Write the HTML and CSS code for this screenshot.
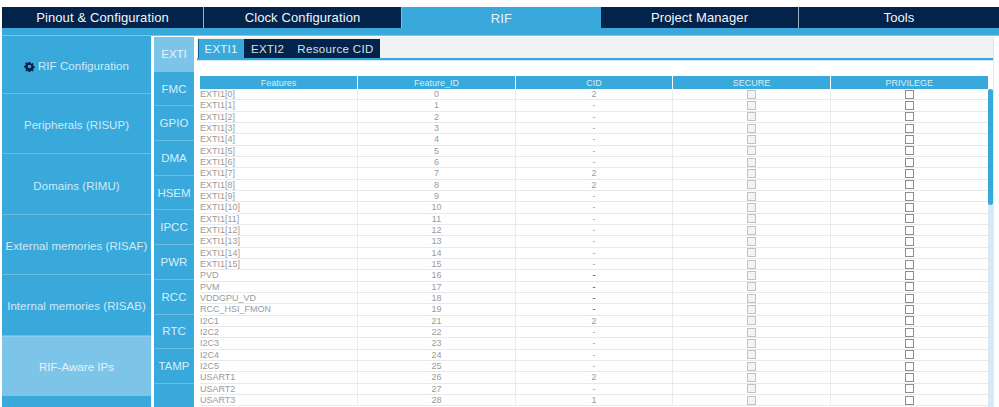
FILE: index.html
```html
<!DOCTYPE html>
<html lang="en">
<head>
<meta charset="utf-8">
<title>RIF</title>
<link rel="stylesheet" href="styles.css">
</head>
<body>
<div class="app">
  <nav class="topnav">
    <div class="topitem">Pinout &amp; Configuration</div>
    <div class="topitem">Clock Configuration</div>
    <div class="topitem active">RIF</div>
    <div class="topitem">Project Manager</div>
    <div class="topitem">Tools</div>
  </nav>
  <div class="strip"></div>
  <div class="main">
    <aside class="side">
      <div class="sideitem first"><svg class="gear" viewBox="0 0 24 24"><path d="M10 1h4l.6 3.1 2.3 1 2.6-1.8 2.8 2.8-1.8 2.6 1 2.3 3.1.6v4l-3.1.6-1 2.3 1.8 2.6-2.8 2.8-2.6-1.8-2.3 1-.6 3.1h-4l-.6-3.1-2.3-1-2.6 1.8-2.8-2.8 1.8-2.6-1-2.3L-1 14v-4l3.1-.6 1-2.3L1.3 4.500l2.800-2.800 2.600 1.800 2.300-1z" transform="translate(1.200 1.200) scale(.9)"/><circle cx="12" cy="12" r="4" class="hole"/></svg>RIF Configuration</div>
      <div class="sideitem">Peripherals (RISUP)</div>
      <div class="sideitem">Domains (RIMU)</div>
      <div class="sideitem">External memories (RISAF)</div>
      <div class="sideitem">Internal memories (RISAB)</div>
      <div class="sideitem selected">RIF-Aware IPs</div>
    </aside>
    <div class="subside">
      <div class="subitem selected">EXTI</div>
      <div class="subitem">FMC</div>
      <div class="subitem">GPIO</div>
      <div class="subitem">DMA</div>
      <div class="subitem">HSEM</div>
      <div class="subitem">IPCC</div>
      <div class="subitem">PWR</div>
      <div class="subitem">RCC</div>
      <div class="subitem">RTC</div>
      <div class="subitem">TAMP</div>
    </div>
    <section class="content">
      <div class="tabs">
        <div class="tab active">EXTI1</div>
        <div class="tab">EXTI2</div>
        <div class="tab">Resource CID</div>
      </div>
      <div class="tablewrap">
        <div class="table">
          <div class="row head"><span>Features</span><span>Feature_ID</span><span>CID</span><span>SECURE</span><span>PRIVILEGE</span></div>
          <div class="row"><span>EXTI1[0]</span><span>0</span><span>2</span><span><i class="cb"></i></span><span><i class="cb dark"></i></span></div>
          <div class="row"><span>EXTI1[1]</span><span>1</span><span>-</span><span><i class="cb"></i></span><span><i class="cb dark"></i></span></div>
          <div class="row"><span>EXTI1[2]</span><span>2</span><span>-</span><span><i class="cb"></i></span><span><i class="cb dark"></i></span></div>
          <div class="row"><span>EXTI1[3]</span><span>3</span><span>-</span><span><i class="cb"></i></span><span><i class="cb dark"></i></span></div>
          <div class="row"><span>EXTI1[4]</span><span>4</span><span>-</span><span><i class="cb"></i></span><span><i class="cb dark"></i></span></div>
          <div class="row"><span>EXTI1[5]</span><span>5</span><span>-</span><span><i class="cb"></i></span><span><i class="cb dark"></i></span></div>
          <div class="row"><span>EXTI1[6]</span><span>6</span><span>-</span><span><i class="cb"></i></span><span><i class="cb dark"></i></span></div>
          <div class="row"><span>EXTI1[7]</span><span>7</span><span>2</span><span><i class="cb"></i></span><span><i class="cb dark"></i></span></div>
          <div class="row"><span>EXTI1[8]</span><span>8</span><span>2</span><span><i class="cb"></i></span><span><i class="cb dark"></i></span></div>
          <div class="row"><span>EXTI1[9]</span><span>9</span><span>-</span><span><i class="cb"></i></span><span><i class="cb dark"></i></span></div>
          <div class="row"><span>EXTI1[10]</span><span>10</span><span>-</span><span><i class="cb"></i></span><span><i class="cb dark"></i></span></div>
          <div class="row"><span>EXTI1[11]</span><span>11</span><span>-</span><span><i class="cb"></i></span><span><i class="cb dark"></i></span></div>
          <div class="row"><span>EXTI1[12]</span><span>12</span><span>-</span><span><i class="cb"></i></span><span><i class="cb dark"></i></span></div>
          <div class="row"><span>EXTI1[13]</span><span>13</span><span>-</span><span><i class="cb"></i></span><span><i class="cb dark"></i></span></div>
          <div class="row"><span>EXTI1[14]</span><span>14</span><span>-</span><span><i class="cb"></i></span><span><i class="cb dark"></i></span></div>
          <div class="row"><span>EXTI1[15]</span><span>15</span><span>-</span><span><i class="cb"></i></span><span><i class="cb dark"></i></span></div>
          <div class="row"><span>PVD</span><span>16</span><span class="strong">-</span><span><i class="cb"></i></span><span><i class="cb dark"></i></span></div>
          <div class="row"><span>PVM</span><span>17</span><span class="strong">-</span><span><i class="cb"></i></span><span><i class="cb dark"></i></span></div>
          <div class="row"><span>VDDGPU_VD</span><span>18</span><span class="strong">-</span><span><i class="cb"></i></span><span><i class="cb dark"></i></span></div>
          <div class="row"><span>RCC_HSI_FMON</span><span>19</span><span class="strong">-</span><span><i class="cb"></i></span><span><i class="cb dark"></i></span></div>
          <div class="row"><span>I2C1</span><span>21</span><span>2</span><span><i class="cb"></i></span><span><i class="cb dark"></i></span></div>
          <div class="row"><span>I2C2</span><span>22</span><span>-</span><span><i class="cb"></i></span><span><i class="cb dark"></i></span></div>
          <div class="row"><span>I2C3</span><span>23</span><span>-</span><span><i class="cb"></i></span><span><i class="cb dark"></i></span></div>
          <div class="row"><span>I2C4</span><span>24</span><span>-</span><span><i class="cb"></i></span><span><i class="cb dark"></i></span></div>
          <div class="row"><span>I2C5</span><span>25</span><span>-</span><span><i class="cb"></i></span><span><i class="cb dark"></i></span></div>
          <div class="row"><span>USART1</span><span>26</span><span>2</span><span><i class="cb"></i></span><span><i class="cb dark"></i></span></div>
          <div class="row"><span>USART2</span><span>27</span><span>-</span><span><i class="cb"></i></span><span><i class="cb dark"></i></span></div>
          <div class="row"><span>USART3</span><span>28</span><span>1</span><span><i class="cb"></i></span><span><i class="cb dark"></i></span></div>
        </div>
        <div class="track"><div class="thumb"></div></div>
      </div>
    </section>
  </div>
</div>
</body>
</html>
```
FILE: styles.css
```css
* { box-sizing: border-box; }
html, body { margin: 0; height: 100%; overflow: hidden; background: #fff; }
body { font-family: "Liberation Sans", Arial, sans-serif; }
.app { height: 407px; padding: 7px 0 0 2px; display: flex; flex-direction: column; overflow: hidden; }

.topnav { display: flex; height: 21px; flex: none; background: #03234b; width: 997px; }
.topitem { width: 198px; display: flex; align-items: center; justify-content: center; color: #f2f6fa; font-size: 13px; letter-spacing: .12px; border-right: 1px solid #9fb0c4; }
.topitem:first-child { width: 202px; }
.topitem:last-child { border-right: 0; width: 200px; }
.topitem.active { background: #39a9dc; color: #e8f4fb; height: 22px; border-right: 0; width: 199px; }
.strip { height: 8px; flex: none; background: #39a9dc; width: 997px; border-bottom: 1px solid #7cc4e8; }

.main { flex: 1; display: flex; min-height: 0; }
.side { width: 149px; flex: none; background: #39a9dc; display: flex; flex-direction: column; }
.sideitem { height: 60.400px; flex: none; display: flex; align-items: center; justify-content: center; color: #cfe9f7; font-size: 11.500px; letter-spacing: .05px; padding-top: 3px; border-bottom: 1px solid #6cbde4; white-space: nowrap; }
.sideitem.first { height: 58px; }
.sideitem.selected { background: #7cc5e9; color: #e3f3fb; border-top: 1px solid #8fcfee; border-bottom: 0; padding-top: 1px; }
.gear { width: 11px; height: 11px; margin-right: 3px; fill: #03234b; }
.gear .hole { fill: #39a9dc; }

.subside { width: 40px; flex: none; margin-left: 3px; margin-top: 1px; background: #39a9dc; display: flex; flex-direction: column; }
.subitem { height: 34.700px; flex: none; display: flex; align-items: center; justify-content: center; color: #d7eef9; font-size: 11.500px; border-bottom: 1px solid #6cbde4; }
.subitem.selected { background: #7cc5e9; color: #e6f4fb; border-bottom: 0; }

.content { width: 797px; flex: none; margin-left: 3px; margin-top: 1px; border-right: 1px solid #d8e8f5; display: flex; flex-direction: column; min-height: 0; }
.tabs { height: 23px; flex: none; display: flex; background: #f0f1f3; padding: 2px 0 0 1px; border-bottom: 2px solid #39a9dc; }
.tab { height: 19px; width: 47px; background: #03234b; color: #d5e0ea; font-size: 11.500px; letter-spacing: .2px; display: flex; align-items: center; justify-content: center; white-space: nowrap; }
.tab:last-child { width: 89px; letter-spacing: .35px; }
.tab.active { width: 46px; background: #39a9dc; color: #e3f3fb; box-shadow: inset 1px 0 #0f5f95; }

.tablewrap { flex: 1; position: relative; border-top: 1px solid #cfe6f3; padding: 15px 0 0 3px; min-height: 0; overflow: hidden; }
.table { width: 787.500px; }
.row { display: grid; grid-template-columns: 158px 158px 157px 158px 156.500px; height: 11.330px; border-bottom: 1px solid #e6eaee; color: #9a9a9a; font-size: 9px; }
.row span { border-right: 1px solid #e8edf1; overflow: hidden; white-space: nowrap; display: flex; justify-content: center; align-items: center; height: 10.300px; }
.row span:first-child { justify-content: flex-start; }
.row span:last-child { border-right: 0; }
.row .strong { color: #333; }
.row.head { height: 13px; background: #39a9dc; color: #d6edf8; border-bottom: 0; }
.row.head span { height: 13px; border-right: 1px solid #fff; justify-content: center; }
.row.head span:last-child { border-right: 0; }

.cb { display: block; width: 9px; height: 9px; border: 1px solid #c2c2c2; background: #f4f4f4; }
.cb.dark { border-color: #8c8c8c; background: #fff; }

.track { position: absolute; top: 28px; right: 0; bottom: 0; width: 5px; background: #d8e8f5; }
.thumb { width: 5px; height: 116px; background: #39a9dc; border-radius: 3px; }
```
